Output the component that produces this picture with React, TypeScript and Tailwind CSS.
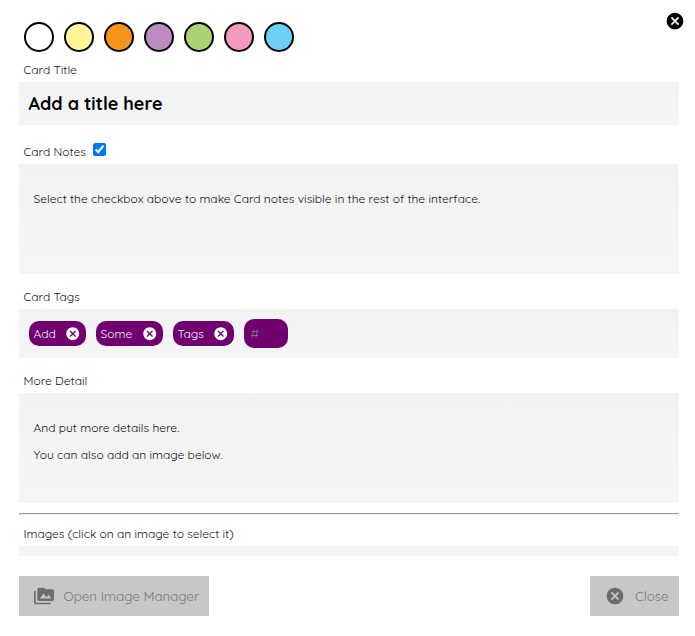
import type { ReactNode } from "react";
import { MdCancel, MdPermMedia } from "react-icons/md";

const swatches = [
  "bg-white",
  "bg-[#fff799]",
  "bg-[#f7941d]",
  "bg-[#bd8cbf]",
  "bg-[#acd373]",
  "bg-[#f49ac1]",
  "bg-[#6dcff6]",
];

const tags = [
  { name: "Add", width: "w-[57px]" },
  { name: "Some", width: "w-[67px]" },
  { name: "Tags", width: "w-[61px]" },
];

function Label({ children, className = "" }: { children: ReactNode; className?: string }) {
  return <div className={`flex h-4 items-center pl-[4.5px] text-[12px] leading-4 ${className}`}>{children}</div>;
}

const panel = "bg-linear-to-b from-[#f2f2f2] to-[#f5f5f5]";

export default function App() {
  return (
    <div className="h-[636px] w-[695px] overflow-hidden bg-white pl-[19px] pr-4 font-['Quicksand','Inter','Lato',sans-serif] text-[#111]">
      <div className="flex h-[62px] items-start justify-between">
        <div className="flex gap-2.5 pl-[5px] pt-[22px]">
          {swatches.map((color) => (
            <button key={color} className={`size-[30px] rounded-full border-2 border-black ${color}`} />
          ))}
        </div>
        <MdCancel className="-mr-1.5 mt-[11px] size-5 text-black" />
      </div>

      <Label>Card Title</Label>
      <div className={`mt-1 flex h-[43px] items-center pl-[9.5px] text-[18px] font-bold text-black ${panel}`}>
        Add a title here
      </div>

      <Label className="mt-[19px]">
        <span className="w-[69.5px]">Card Notes</span>
        <input type="checkbox" defaultChecked className="mb-[5px] size-[13px]" />
      </Label>
      <div className={`mt-1 h-[110px] pl-[14.5px] pt-[27px] text-[12px] leading-4 ${panel}`}>
        Select the checkbox above to make Card notes visible in the rest of the interface.
      </div>

      <Label className="mt-[15px]">Card Tags</Label>
      <div className={`mt-1 flex h-[49px] items-center gap-2.5 pl-2.5 ${panel}`}>
        {tags.map((tag) => (
          <div key={tag.name} className={`flex h-[25px] items-center justify-between rounded-[10px] bg-[#700070] pl-[4.5px] pr-[5.5px] text-[12px] text-[#f4f4f4] ${tag.width}`}>
            <span className="pt-px">{tag.name}</span>
            <MdCancel className="size-[15.5px] text-white" />
          </div>
        ))}
        <div className="flex h-[29px] w-11 items-center rounded-[10px] bg-[#700070] pl-[6.5px] pt-px text-[13.333px] text-[#757575]">#</div>
      </div>

      <Label className="mt-[15px]">More Detail</Label>
      <div className={`mt-1 flex h-[110px] flex-col gap-[11px] pl-[14.5px] pt-[27px] text-[12px] leading-4 ${panel}`}>
        <p>And put more details here.</p>
        <p>You can also add an image below.</p>
      </div>

      <hr className="mt-2.5 h-0.5 border border-b-[#eee] border-l-[#999] border-r-[#eee] border-t-[#999]" />
      <Label className="mt-[11px]">Images (click on an image to select it)</Label>
      <div className={`mt-1 h-2.5 ${panel}`} />

      <div className="mt-5 flex h-10 justify-between text-[13.333px] text-[#777]">
        <button className="flex w-[190px] items-center bg-[#c7c7c7] pl-[15px]">
          <MdPermMedia className="size-5 text-[#6c6c6c]" />
          <span className="ml-[9.5px] whitespace-nowrap pt-0.5">Open Image Manager</span>
        </button>
        <button className="flex w-[89px] items-center bg-[#c7c7c7] pl-[15px]">
          <MdCancel className="size-5 text-[#6c6c6c]" />
          <span className="ml-2.5 pt-0.5">Close</span>
        </button>
      </div>
    </div>
  );
}
